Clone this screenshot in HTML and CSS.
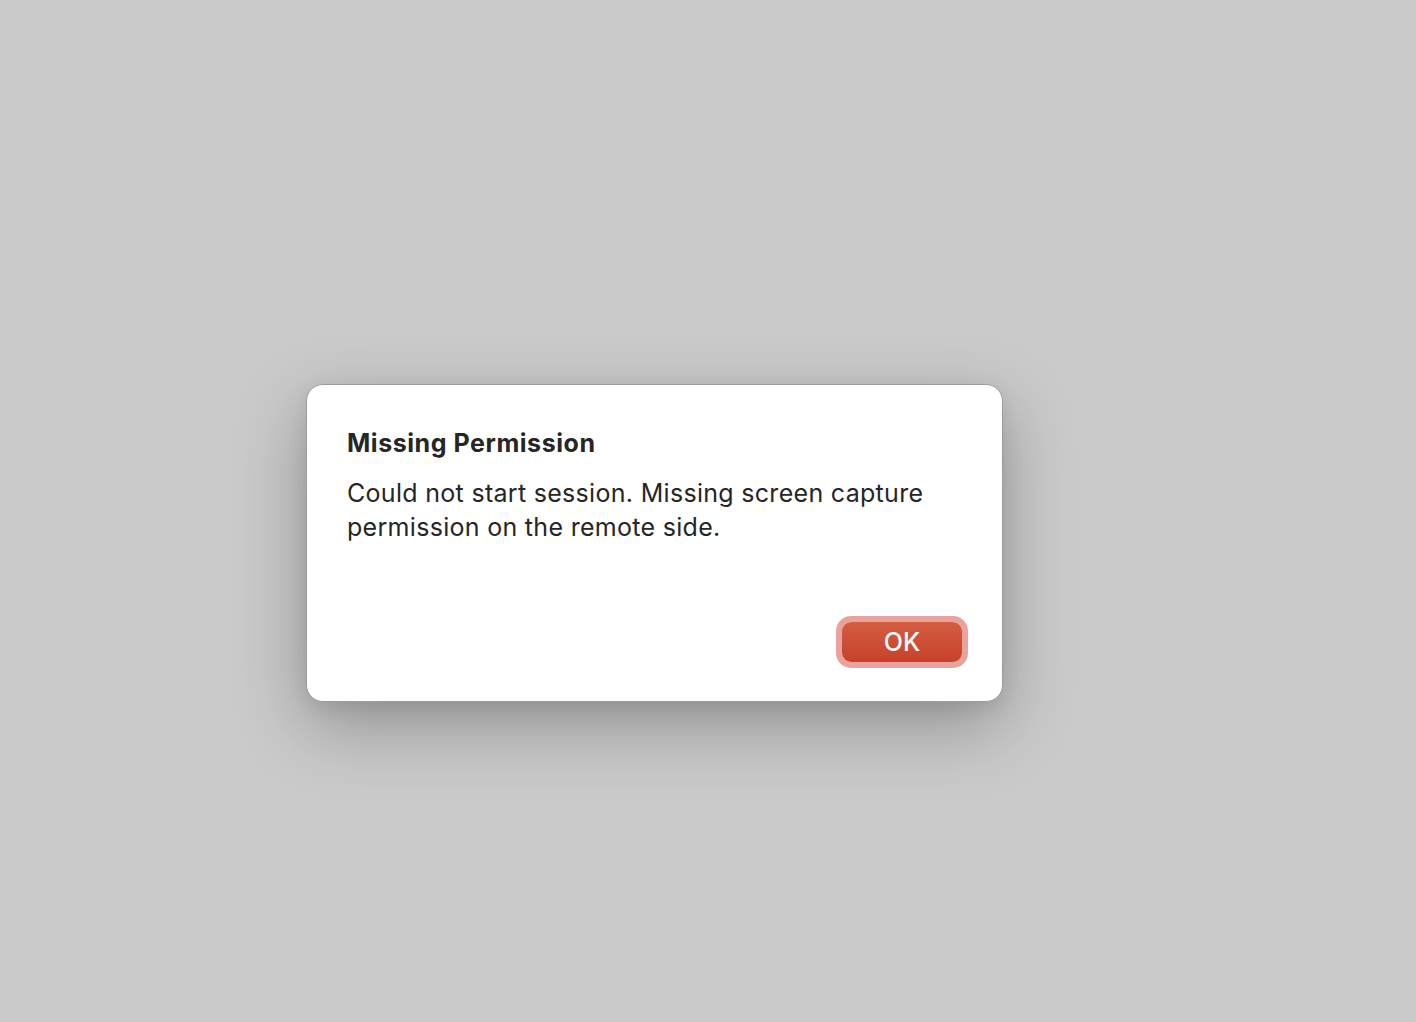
FILE: index.html
```html
<!DOCTYPE html>
<html lang="en">
<head>
  <meta charset="UTF-8" />
  <meta name="viewport" content="width=device-width, initial-scale=1.0"/>
  <title>Missing Permission</title>
  <link rel="stylesheet" href="styles.css">
</head>
<body>
  <div class="dialog">
    <h1 class="title">Missing Permission</h1>
    <p class="message">Could not start session. Missing screen capture permission on the remote side.</p>
    <div class="actions">
      <button class="ok">OK</button>
    </div>
  </div>
</body>
</html>
```

FILE: styles.css
```css
html, body {
  height: 100%;
}
body {
  margin: 0;
  padding: 384px 0 0 306px;
  box-sizing: border-box;
  background-color: #cacaca;
  font-family: Inter, "Noto Sans", sans-serif;
  color: #262626;
}
.dialog {
  width: 697px;
  height: 318px;
  box-sizing: border-box;
  padding: 40px 40px 39px 40px;
  background: #fff;
  border: 1px solid #9c9c9c;
  border-radius: 17px;
  box-shadow: 0 24px 70px rgba(0,0,0,0.28), 0 6px 20px rgba(0,0,0,0.08);
  display: flex;
  flex-direction: column;
}
.title {
  margin: 0;
  font-size: 25px;
  font-weight: 700;
  line-height: 36px;
  letter-spacing: 0.55px;
}
.message {
  margin: 15px 0 0 0;
  font-size: 25px;
  line-height: 34px;
  letter-spacing: 0.3px;
  font-weight: 400;
}
.actions {
  margin-top: auto;
  display: flex;
  justify-content: flex-end;
}
.ok {
  width: 120px;
  height: 40px;
  border: none;
  border-radius: 9px;
  background: linear-gradient(#d45d42, #c8412a);
  box-shadow: 0 0 0 6px #e9a39c;
  color: #fff;
  font-family: Inter, "Noto Sans", sans-serif;
  font-size: 25px;
  font-weight: 500;
  cursor: pointer;
}
```
